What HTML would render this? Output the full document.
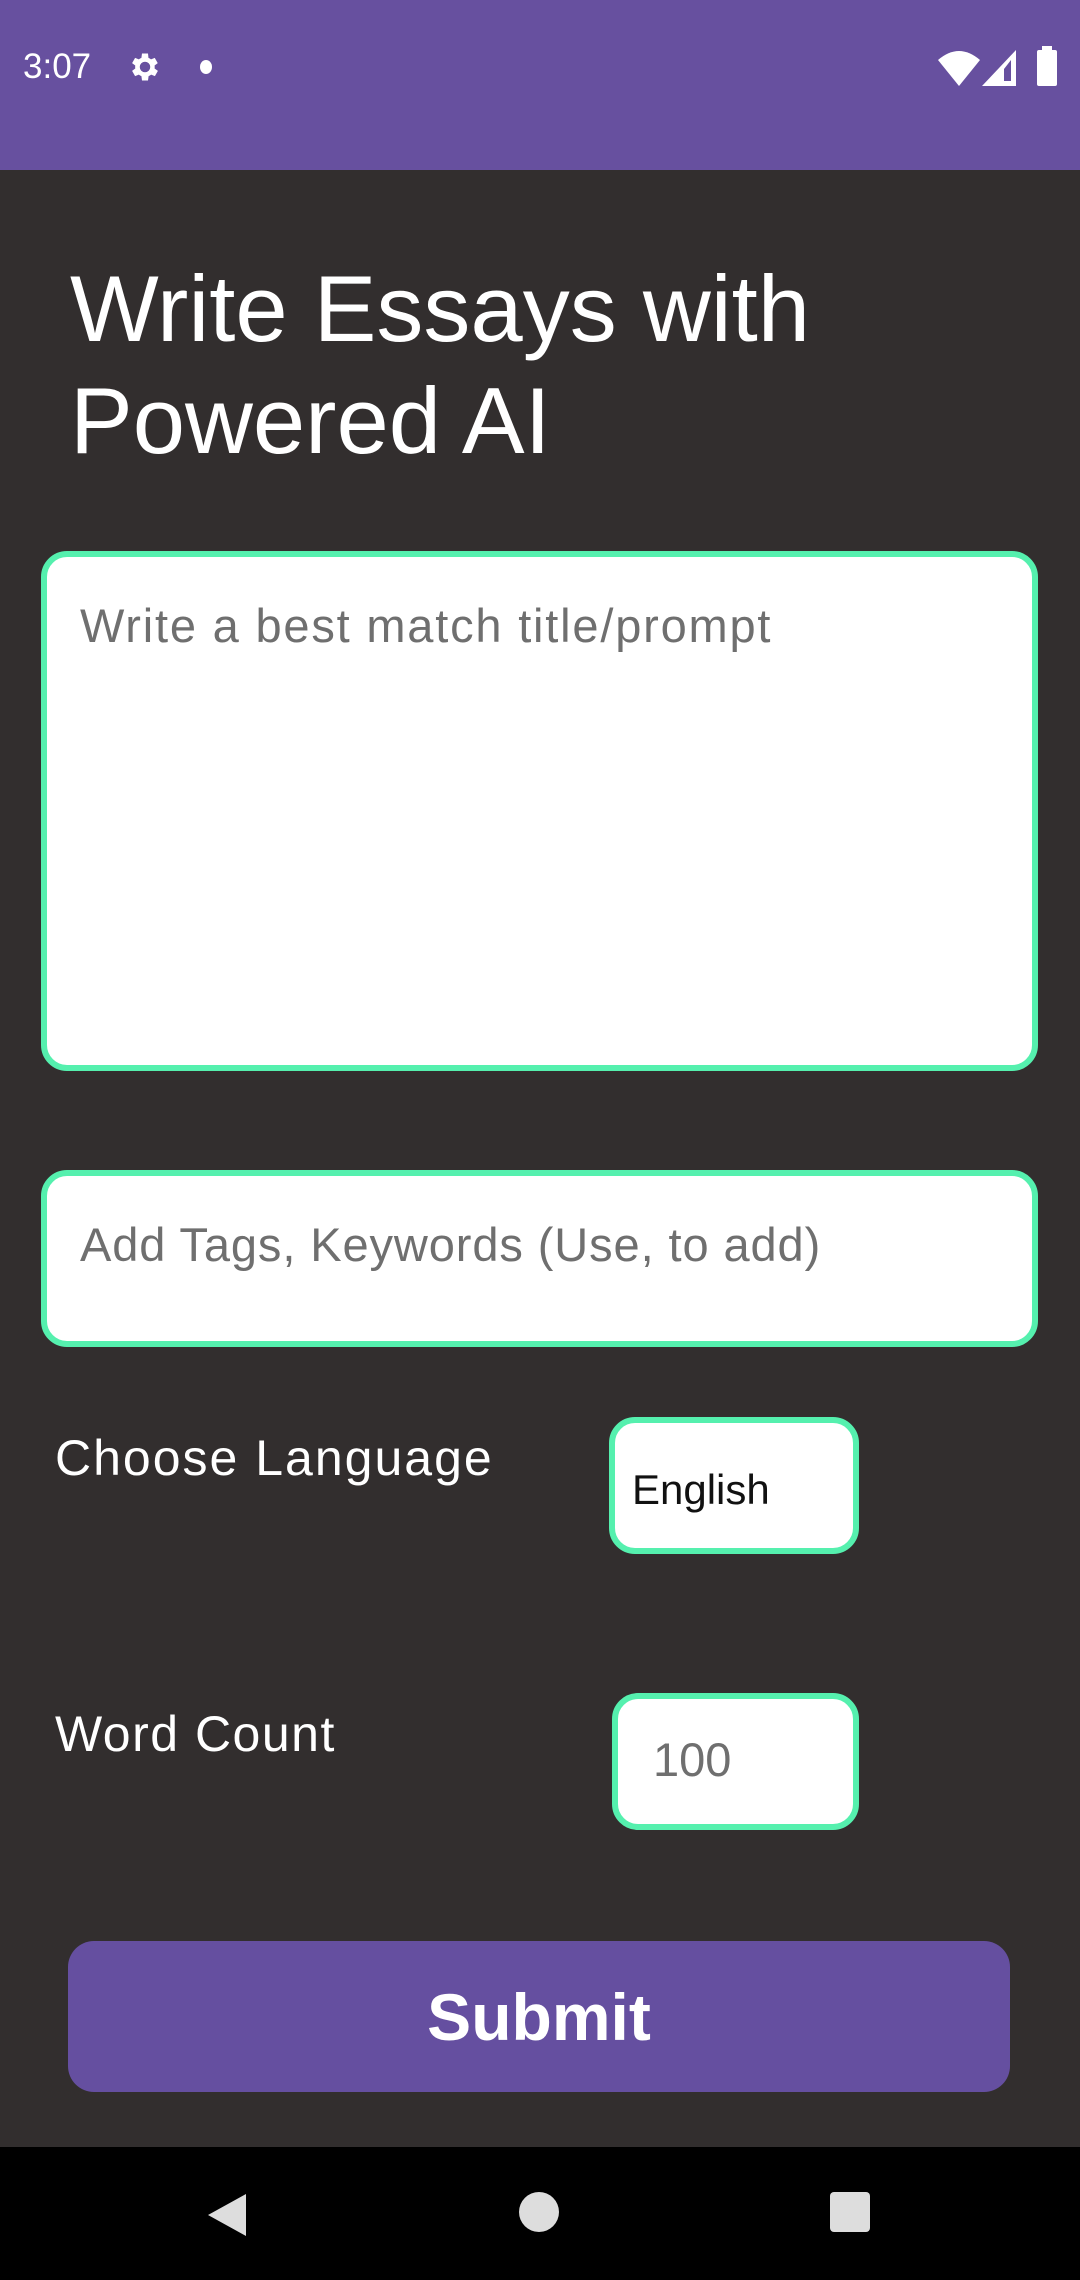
<!DOCTYPE html>
<html><head><meta charset="utf-8"><style>
*{margin:0;padding:0;box-sizing:border-box}
body{width:1080px;height:2280px;background:#322e2e;font-family:"Liberation Sans",sans-serif;position:relative;overflow:hidden}
.abs{position:absolute}
.status{left:0;top:0;width:1080px;height:170px;background:#67509f}
.box{position:absolute;background:#fff;border:6px solid #55f0ae;border-radius:26px}
.ph{position:absolute;color:#6f6f6f;font-size:47px;letter-spacing:1.8px;white-space:nowrap}
.lbl{position:absolute;color:#fff;font-size:50px;letter-spacing:2px;white-space:nowrap}
</style></head><body>
<div class="abs status"></div>
<div class="abs" style="left:23px;top:47px;color:#fff;font-size:35px">3:07</div>
<svg class="abs" style="left:127px;top:49px" width="36" height="36" viewBox="0 0 24 24"><path fill="#fff" d="M19.4 13a7.5 7.5 0 0 0 0-2l2.1-1.6-2-3.5-2.5 1a7 7 0 0 0-1.7-1L15 3h-4l-.4 2.9a7 7 0 0 0-1.7 1l-2.5-1-2 3.5L6.5 11a7.5 7.5 0 0 0 0 2l-2.1 1.6 2 3.5 2.5-1a7 7 0 0 0 1.7 1L11 21h4l.4-2.9a7 7 0 0 0 1.7-1l2.5 1 2-3.5zM13 15.5a3.5 3.5 0 1 1 0-7 3.5 3.5 0 0 1 0 7z" transform="translate(-1 0)"/></svg>
<div class="abs" style="left:200px;top:60px;width:12px;height:14px;border-radius:50%;background:#fff"></div>
<svg class="abs" style="left:938px;top:50px" width="42" height="36" viewBox="0 0 42 36"><path fill="#fff" d="M0 10 Q21 -8 42 10 L21 36Z"/></svg>
<svg class="abs" style="left:982px;top:50px" width="34" height="36" viewBox="0 0 34 36"><path fill="#fff" d="M34 0V36H0ZM29 10 L22 19V31H29Z" fill-rule="evenodd"/></svg>
<div class="abs" style="left:1037px;top:50px;width:20px;height:36px;background:#fff;border-radius:2px"></div>
<div class="abs" style="left:1042px;top:46px;width:10px;height:6px;background:#fff"></div>
<div class="abs" style="left:70px;top:253px;color:#fff;font-size:94px;line-height:112px">Write Essays with<br>Powered AI</div>
<div class="box" style="left:41px;top:551px;width:997px;height:520px"></div>
<div class="ph" style="left:80px;top:598px">Write a best match title/prompt</div>
<div class="box" style="left:41px;top:1170px;width:997px;height:177px"></div>
<div class="ph" style="left:80px;top:1217px;letter-spacing:0.9px">Add Tags, Keywords (Use, to add)</div>
<div class="lbl" style="left:55px;top:1429px">Choose Language</div>
<div class="box" style="left:609px;top:1417px;width:250px;height:137px"></div>
<div class="abs" style="left:632px;top:1466px;font-size:42px;color:#111">English</div>
<div class="lbl" style="left:55px;top:1705px;letter-spacing:1.5px">Word Count</div>
<div class="box" style="left:612px;top:1693px;width:247px;height:137px"></div>
<div class="ph" style="left:653px;top:1732px;letter-spacing:0">100</div>
<div class="abs" style="left:68px;top:1941px;width:942px;height:151px;background:#654fa0;border-radius:26px;color:#fff;font-size:66px;font-weight:bold;text-align:center;line-height:153px">Submit</div>
<div class="abs" style="left:0;top:2147px;width:1080px;height:133px;background:#000"></div>
<svg class="abs" style="left:208px;top:2194px" width="38" height="42" viewBox="0 0 38 42"><path fill="#ddd" d="M38 0V42L0 21Z"/></svg>
<div class="abs" style="left:519px;top:2192px;width:40px;height:40px;border-radius:50%;background:#ddd"></div>
<div class="abs" style="left:830px;top:2192px;width:40px;height:40px;border-radius:4px;background:#ddd"></div>
</body></html>
